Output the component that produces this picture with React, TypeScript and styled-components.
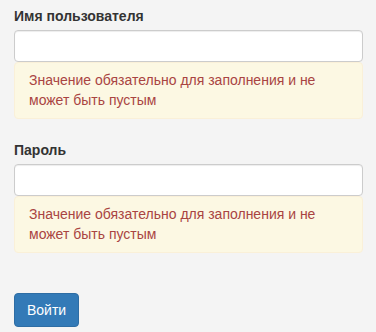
import styled, { createGlobalStyle } from "styled-components";

const GlobalStyle = createGlobalStyle`
  html, body {
    margin: 0;
    padding: 0;
    background-color: #f4f4f4;
  }
  body {
    font-family: "Liberation Sans", Arial, sans-serif;
    font-size: 14px;
    line-height: 20px;
    color: #333;
  }
`;

const Form = styled.form`
  display: flex;
  flex-direction: column;
  padding: 6px 13px 0 14px;
`;

const FormGroup = styled.div`
  display: flex;
  flex-direction: column;
  margin-bottom: 21px;
`;

const Label = styled.label`
  font-weight: bold;
  font-size: 14px;
  line-height: 20px;
  margin-bottom: 4px;
  color: #333;
`;

const Input = styled.input`
  box-sizing: border-box;
  height: 32px;
  width: 100%;
  padding: 6px 12px;
  font-family: inherit;
  font-size: 14px;
  background-color: #fff;
  border: 1px solid #ccc;
  border-radius: 4px;
  box-shadow: inset 0 1px 1px rgba(0, 0, 0, 0.075);
  outline: none;
`;

const Alert = styled.div`
  box-sizing: border-box;
  padding: 7px 14px 8px;
  color: #a94442;
  background-color: #fcf8e3;
  border: 1px solid #faf0d8;
  border-radius: 4px;
  font-size: 14px;
  line-height: 20px;
`;

const SubmitButton = styled.button`
  align-self: flex-start;
  margin-top: 19px;
  padding: 6px 12px;
  font-family: inherit;
  font-size: 14px;
  line-height: 20px;
  color: #fff;
  background-color: #337ab7;
  border: 1px solid #2e6da4;
  border-radius: 4px;
  cursor: pointer;
`;

const fields = [
  { id: "username", label: "Имя пользователя", type: "text" },
  { id: "password", label: "Пароль", type: "password" },
];

const errorText = "Значение обязательно для заполнения и не может быть пустым";

const App = () => {
  return (
    <>
      <GlobalStyle />
      <Form onSubmit={(e) => e.preventDefault()}>
        {fields.map((field) => (
          <FormGroup key={field.id}>
            <Label htmlFor={field.id}>{field.label}</Label>
            <Input id={field.id} name={field.id} type={field.type} />
            <Alert>{errorText}</Alert>
          </FormGroup>
        ))}
        <SubmitButton type="submit">Войти</SubmitButton>
      </Form>
    </>
  );
};

export default App;
